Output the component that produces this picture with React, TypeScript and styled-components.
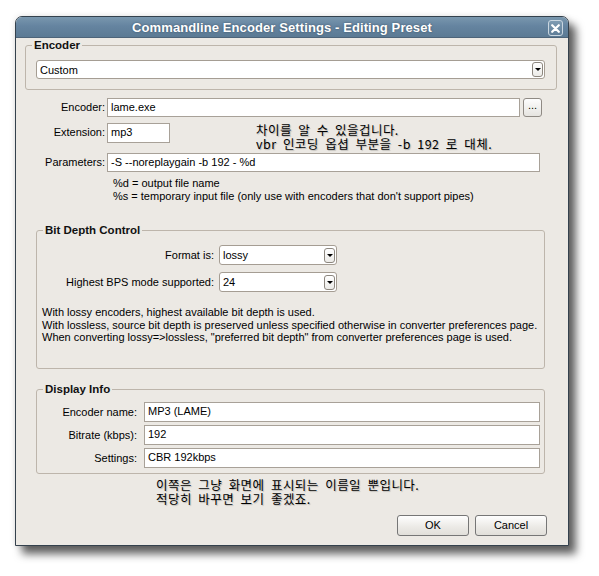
import React from "react";
import styled, { createGlobalStyle } from "styled-components";

const Global = createGlobalStyle`
  html, body { margin: 0; padding: 0; background: #ffffff; }
  body { font-family: "Liberation Sans", Arial, sans-serif; font-size: 11px; color: #000; }
  * { box-sizing: border-box; }
`;

const Page = styled.div`
  width: 599px;
  height: 576px;
  padding: 16px 0 0 15px;
`;

const Window = styled.div`
  width: 554px;
  height: 530px;
  display: flex;
  flex-direction: column;
  border: 1px solid #34414d;
  border-radius: 7px 7px 0 0;
  background: #ece9e4;
  box-shadow: 7px 8px 9px rgba(0, 0, 0, 0.62), 0 0 6px rgba(0, 0, 0, 0.12);
  overflow: hidden;
`;

const TitleBar = styled.div`
  height: 21px;
  flex: none;
  display: flex;
  align-items: center;
  padding: 0 5px 0 0;
  background: linear-gradient(#7997ae, #6584a0 45%, #5b7a94);
  border-bottom: 1px solid #4d6479;
`;

const Title = styled.div`
  flex: 1;
  text-align: center;
  color: #fff;
  font-weight: bold;
  font-size: 13px;
  text-shadow: 0 0 2px rgba(30, 45, 60, 0.6);
  letter-spacing: 0.1px;
`;

const CloseButton = styled.div`
  width: 15px;
  height: 16px;
  margin-top: 2px;
  border: 1px solid #c9d6e0;
  border-radius: 3px;
  background: linear-gradient(#7e9bb2, #5f7e98);
  display: flex;
  align-items: center;
  justify-content: center;
`;

const Body = styled.div`
  flex: 1;
  display: flex;
  flex-direction: column;
  padding: 1px 11px 0 9px;
`;

const Group = styled.fieldset<{ $inset?: boolean; $top?: number }>`
  margin: ${(p) => p.$top ?? 0}px ${(p) => (p.$inset ? "12px 0 11px" : "0 0 0")};
  padding: 0;
  min-width: 0;
  border: 1px solid #bdb5ab;
  border-radius: 3px;
`;

const Legend = styled.legend`
  margin-left: 6px;
  padding: 0 2px;
  font-weight: bold;
  font-size: 11.5px;
  line-height: 13px;
  color: #111;
`;

const EncoderGroupBody = styled.div`
  padding: 8px 11px 10px 10px;
`;

const Combo = styled.div<{ $width?: number; $height?: number }>`
  display: flex;
  align-items: center;
  height: ${(p) => p.$height ?? 20}px;
  width: ${(p) => (p.$width ? `${p.$width}px` : "auto")};
  flex: ${(p) => (p.$width ? "none" : "1")};
  border: 1px solid #a59d93;
  border-radius: 3px;
  background: #fff;
  padding: 0 1px 0 3px;
`;

const ComboText = styled.span`
  flex: 1;
`;

const ArrowButton = styled.span`
  width: 11px;
  height: 15px;
  border: 1px solid #8d877f;
  border-radius: 3px;
  background: linear-gradient(#ffffff, #ecebe8);
  display: flex;
  align-items: center;
  justify-content: center;
  &::after {
    content: "";
    border-left: 3px solid transparent;
    border-right: 3px solid transparent;
    border-top: 3px solid #000;
  }
`;

const FormRow = styled.div<{ $top: number; $right: number }>`
  display: flex;
  align-items: flex-start;
  gap: 2px;
  margin-top: ${(p) => p.$top}px;
  padding-right: ${(p) => p.$right}px;
`;

const Label = styled.label<{ $width: number }>`
  flex: none;
  width: ${(p) => p.$width}px;
  text-align: right;
  line-height: 19px;
  white-space: nowrap;
`;

const TextBox = styled.div<{ $width?: number; $height?: number }>`
  height: ${(p) => p.$height ?? 19}px;
  width: ${(p) => (p.$width ? `${p.$width}px` : "auto")};
  flex: ${(p) => (p.$width ? "none" : "1")};
  border: 1px solid #a8a198;
  background: #fff;
  padding: 0 3px;
  line-height: 17px;
  white-space: nowrap;
`;

const BrowseButton = styled.div`
  flex: none;
  width: 19px;
  height: 19px;
  margin-left: 1px;
  border: 1px solid #8f8a84;
  border-radius: 3px;
  background: linear-gradient(#fdfdfd, #e6e4e0);
  text-align: center;
  line-height: 13px;
  font-size: 11px;
`;

const KoreanNote = styled.div<{ $left: number; $top?: number }>`
  margin-left: ${(p) => p.$left}px;
  margin-top: ${(p) => p.$top ?? 0}px;
  font-family: "Noto Sans CJK KR", "Liberation Sans", sans-serif;
  font-size: 12.5px;
  line-height: 14px;
  letter-spacing: 0.45px;
  word-spacing: 3.2px;
  color: #000;
  text-shadow: 1px 1px 1px rgba(0, 0, 0, 0.22);
  white-space: nowrap;
`;

const NoteLine = styled.div`
  height: 14px;
`;

const Notes = styled.div`
  margin-top: 5px;
  padding-left: 88px;
  line-height: 13px;
`;

const GroupInner = styled.div<{ $pad: string }>`
  padding: ${(p) => p.$pad};
  display: flex;
  flex-direction: column;
`;

const FieldRow = styled.div<{ $gap: number; $label: number; $top?: number }>`
  display: grid;
  grid-template-columns: ${(p) => p.$label}px 1fr;
  column-gap: ${(p) => p.$gap}px;
  align-items: center;
  margin-top: ${(p) => p.$top ?? 0}px;
`;

const RightLabel = styled.span`
  text-align: right;
  white-space: nowrap;
`;

const Paragraph = styled.div`
  margin-top: 14px;
  line-height: 12.6px;
  white-space: nowrap;
`;

const ButtonRow = styled.div`
  display: flex;
  justify-content: flex-end;
  gap: 6px;
  margin-top: 9px;
  padding-right: 10px;
`;

const DialogButton = styled.button`
  width: 72px;
  height: 21px;
  border: 1px solid #767676;
  border-radius: 3px;
  background: linear-gradient(#fefefe, #ebe9e5 60%, #e1dfda);
  font-family: "Liberation Sans", Arial, sans-serif;
  font-size: 11px;
  color: #000;
  padding: 0;
`;

export default function App() {
  return (
    <>
      <Global />
      <Page>
        <Window>
          <TitleBar>
            <Title>Commandline Encoder Settings - Editing Preset</Title>
            <CloseButton>
              <svg width="9" height="9" viewBox="0 0 9 9">
                <path d="M1.2 1.2 L7.8 7.8 M7.8 1.2 L1.2 7.8" stroke="#fff" strokeWidth="2.2" strokeLinecap="round" />
              </svg>
            </CloseButton>
          </TitleBar>
          <Body>
            <Group>
              <Legend>Encoder</Legend>
              <EncoderGroupBody>
                <Combo $height={19}>
                  <ComboText>Custom</ComboText>
                  <ArrowButton />
                </Combo>
              </EncoderGroupBody>
            </Group>

            <FormRow $top={8} $right={15}>
              <Label $width={80}>Encoder:</Label>
              <TextBox>lame.exe</TextBox>
              <BrowseButton>...</BrowseButton>
            </FormRow>

            <FormRow $top={6} $right={0}>
              <Label $width={80}>Extension:</Label>
              <TextBox $width={63} $height={20}>mp3</TextBox>
              <KoreanNote $left={84}>
                <NoteLine>차이를 알 수 있을겁니다.</NoteLine>
                <NoteLine>vbr 인코딩 옵셥 부분을 -b 192 로 대체.</NoteLine>
              </KoreanNote>
            </FormRow>

            <FormRow $top={2} $right={17}>
              <Label $width={80}>Parameters:</Label>
              <TextBox>-S --noreplaygain -b 192 - %d</TextBox>
            </FormRow>

            <Notes>
              %d = output file name
              <br />
              %s = temporary input file (only use with encoders that don't support pipes)
            </Notes>

            <Group $inset $top={21}>
              <Legend>Bit Depth Control</Legend>
              <GroupInner $pad="8px 4px 24px 5px">
                <FieldRow $label={172} $gap={5}>
                  <RightLabel>Format is:</RightLabel>
                  <Combo $width={118}>
                    <ComboText>lossy</ComboText>
                    <ArrowButton />
                  </Combo>
                </FieldRow>
                <FieldRow $label={172} $gap={5} $top={7}>
                  <RightLabel>Highest BPS mode supported:</RightLabel>
                  <Combo $width={118}>
                    <ComboText>24</ComboText>
                    <ArrowButton />
                  </Combo>
                </FieldRow>
                <Paragraph>
                  With lossy encoders, highest available bit depth is used.
                  <br />
                  With lossless, source bit depth is preserved unless specified otherwise in converter preferences page.
                  <br />
                  When converting lossy=&gt;lossless, "preferred bit depth" from converter preferences page is used.
                </Paragraph>
              </GroupInner>
            </Group>

            <Group $inset $top={14}>
              <Legend>Display Info</Legend>
              <GroupInner $pad="6px 4px 5px 5px">
                <FieldRow $label={95} $gap={7}>
                  <RightLabel>Encoder name:</RightLabel>
                  <TextBox $height={20}>MP3 (LAME)</TextBox>
                </FieldRow>
                <FieldRow $label={95} $gap={7} $top={3}>
                  <RightLabel>Bitrate (kbps):</RightLabel>
                  <TextBox $height={20}>192</TextBox>
                </FieldRow>
                <FieldRow $label={95} $gap={7} $top={3}>
                  <RightLabel>Settings:</RightLabel>
                  <TextBox $height={20}>CBR 192kbps</TextBox>
                </FieldRow>
              </GroupInner>
            </Group>

            <KoreanNote $left={131} $top={4}>
              <NoteLine>이쪽은 그냥 화면에 표시되는 이름일 뿐입니다.</NoteLine>
              <NoteLine>적당히 바꾸면 보기 좋겠죠.</NoteLine>
            </KoreanNote>

            <ButtonRow>
              <DialogButton>OK</DialogButton>
              <DialogButton>Cancel</DialogButton>
            </ButtonRow>
          </Body>
        </Window>
      </Page>
    </>
  );
}
